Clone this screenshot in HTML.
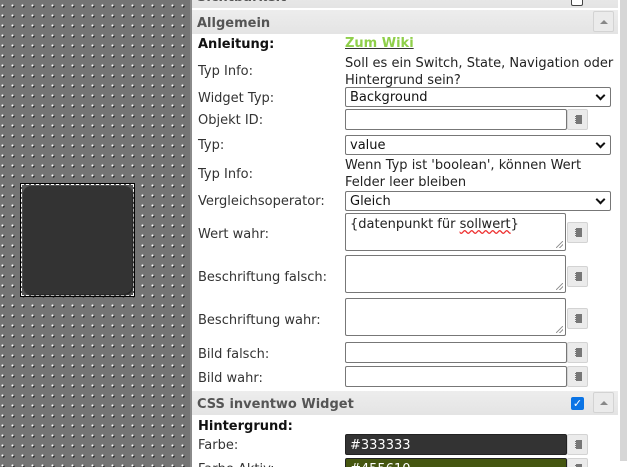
<!DOCTYPE html>
<html><head><meta charset="utf-8"><style>
*{box-sizing:border-box;margin:0;padding:0}
html,body{width:627px;height:467px;overflow:hidden}
body{position:relative;background:#fff;font-family:"DejaVu Sans","Liberation Sans",sans-serif;font-size:13px;color:#222}
#grid{position:absolute;left:0;top:0;width:190px;height:467px;background-color:#747474;
background-image:radial-gradient(circle at 2.5px 5.5px,#fff 0.9px,transparent 1.2px),radial-gradient(circle at 3.5px 6.5px,#111 0.9px,transparent 1.2px);
background-size:10px 10px;background-position:0 0}
#sep{position:absolute;left:190px;top:0;width:2px;height:467px;background:#8a8a8a}
#widget{position:absolute;left:21px;top:184px;width:113px;height:112px;border:1px dashed #fff;outline:1px solid #000;background:#555}
#widget:before{content:"";position:absolute;left:1px;top:1px;right:1px;bottom:1px;border-radius:8px;background:#333;box-shadow:1px 1px 2px #111}
.a{position:absolute}
.hdr{position:absolute;left:192px;width:426px;height:24px;background:linear-gradient(#ededed,#e4e4e4);font-weight:bold;color:#555;font-size:13px;padding:6px 5px 0}
.arr{position:absolute;left:593px;width:21px;height:21px;border:1px solid #d3d3d3;border-radius:2px;background:#ebebeb}
.arr:after{content:"";position:absolute;left:6px;top:8px;border-left:4px solid transparent;border-right:4px solid transparent;border-bottom:4px solid #888}
.lbl{position:absolute;left:198px;color:#333;margin-top:2px}
.sel{position:absolute;left:345px;width:266px;height:20px;border:1px solid #777;border-radius:2px;padding:2px 4px 0;background:#fff;color:#111}
.sel:after{content:"";position:absolute;right:6px;top:4px;width:5px;height:5px;border-right:2px solid #111;border-bottom:2px solid #111;transform:rotate(45deg)}
.inp{position:absolute;left:345px;width:222px;height:21px;border:1px solid #777;border-radius:2px;background:#fff;padding:3px 4px 0}
.ta{position:absolute;left:345px;width:221px;height:38px;border:1px solid #777;border-radius:2px;background:#fff;padding:2px 4px}
.ta:after{content:"";position:absolute;right:2px;bottom:2px;width:7px;height:7px;background:linear-gradient(135deg,transparent 45%,#999 45%,#999 55%,transparent 55%,transparent 70%,#999 70%,#999 80%,transparent 80%)}
.btn{position:absolute;left:567px;width:21px;height:21px;border:1px solid #d3d3d3;border-radius:2px;background:#ebebeb}
.btn:after{content:"";position:absolute;left:7px;top:5px;width:6px;height:9px;background:#777;border-left:1px dotted #eee}
.info{position:absolute;left:345px;line-height:17px;color:#222;margin-top:2px}
</style></head><body>
<div id="grid"></div><div id="sep"></div>
<div id="widget"></div>

<div class="hdr" style="top:-16px">Sichtbarkeit</div>
<div class="a" style="left:571px;top:-6px;width:12px;height:12px;border:1px solid #444;border-radius:2px;background:#fff"></div>

<div class="hdr" style="top:10px">Allgemein</div>
<div class="arr" style="top:11px"></div>

<div class="lbl" style="top:35px;font-weight:bold;color:#111">Anleitung:</div>
<div class="a" style="left:345px;top:36px;color:#8fcf4a;font-weight:bold;text-decoration:underline;text-decoration-color:#333">Zum Wiki</div>

<div class="lbl" style="top:62px">Typ Info:</div>
<div class="info" style="top:53px">Soll es ein Switch, State, Navigation oder<br>Hintergrund sein?</div>

<div class="lbl" style="top:89px">Widget Typ:</div>
<div class="sel" style="top:87px">Background</div>

<div class="lbl" style="top:111px">Objekt ID:</div>
<div class="inp" style="top:109px"></div><div class="btn" style="top:109px"></div>

<div class="lbl" style="top:136px">Typ:</div>
<div class="sel" style="top:135px">value</div>

<div class="lbl" style="top:165px">Typ Info:</div>
<div class="info" style="top:155px">Wenn Typ ist 'boolean', können Wert<br>Felder leer bleiben</div>

<div class="lbl" style="top:192px">Vergleichsoperator:</div>
<div class="sel" style="top:191px">Gleich</div>

<div class="lbl" style="top:225px">Wert wahr:</div>
<div class="ta" style="top:213px;padding-top:3px">{datenpunkt für <span style="text-decoration:underline wavy #e33">sollwert</span>}</div><div class="btn" style="top:222px"></div>

<div class="lbl" style="top:268px">Beschriftung falsch:</div>
<div class="ta" style="top:255px"></div><div class="btn" style="top:266px"></div>

<div class="lbl" style="top:311px">Beschriftung wahr:</div>
<div class="ta" style="top:298px"></div><div class="btn" style="top:308px"></div>

<div class="lbl" style="top:345px">Bild falsch:</div>
<div class="inp" style="top:342px"></div><div class="btn" style="top:342px"></div>

<div class="lbl" style="top:369px">Bild wahr:</div>
<div class="inp" style="top:366px"></div><div class="btn" style="top:366px"></div>

<div class="hdr" style="top:391px">CSS inventwo Widget</div>
<div class="a" style="left:571px;top:397px;width:13px;height:13px;border-radius:2px;background:#0b74e5;color:#fff;font-size:11px;line-height:13px;text-align:center;font-weight:bold">✓</div>
<div class="arr" style="top:392px"></div>

<div class="lbl" style="top:417px;font-weight:bold;color:#111">Hintergrund:</div>

<div class="lbl" style="top:436px">Farbe:</div>
<div class="inp" style="top:434px;background:#333;color:#fff;border-color:#222">#333333</div><div class="btn" style="top:434px"></div>

<div class="lbl" style="top:460px">Farbe Aktiv:</div>
<div class="inp" style="top:458px;background:#455610;color:#fff;border-color:#222">#455610</div><div class="btn" style="top:458px"></div>

<div class="a" style="left:620px;top:0;width:7px;height:461px;background:#d6d6d6"></div>
</body></html>
